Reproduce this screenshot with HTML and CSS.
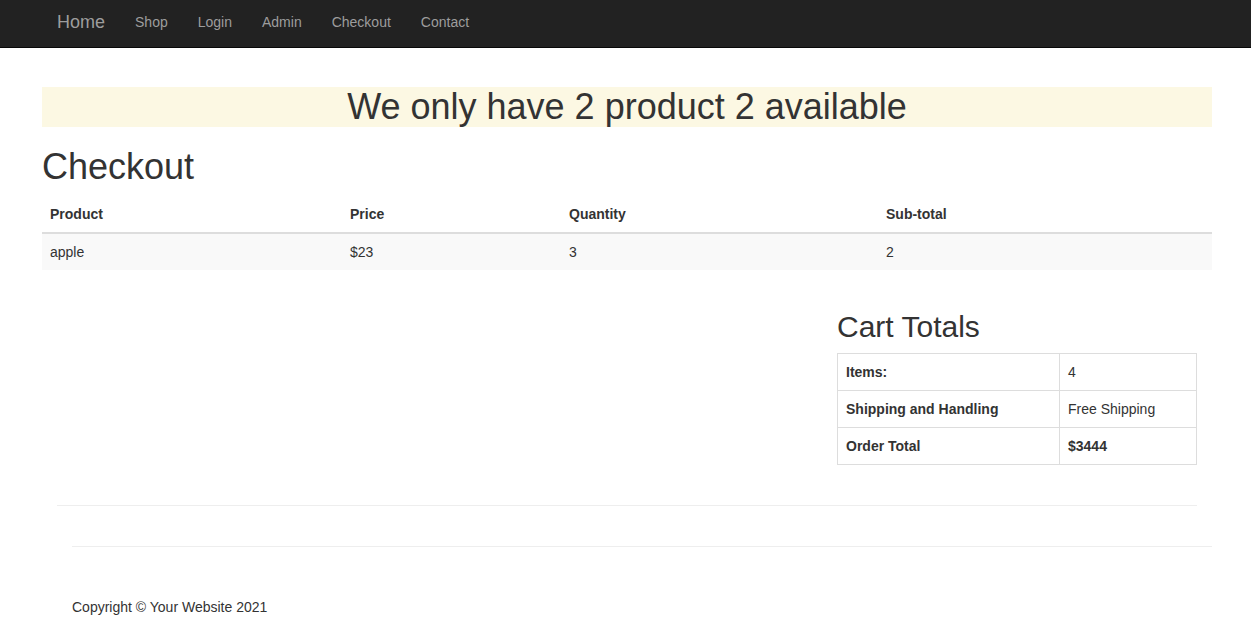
FILE: index.html
```html
<!DOCTYPE html>
<html>
<head>
<meta charset="utf-8">
<title>Checkout</title>
<link rel="stylesheet" href="styles.css">
</head>
<body>
<nav class="navbar">
  <div class="nav-container">
    <a class="brand" href="#">Home</a>
    <ul class="nav-links">
      <li><a href="#">Shop</a></li>
      <li><a href="#">Login</a></li>
      <li><a href="#">Admin</a></li>
      <li><a href="#">Checkout</a></li>
      <li><a href="#">Contact</a></li>
    </ul>
  </div>
</nav>

<main class="container">
  <section class="checkout">
    <h1 class="alert-banner">We only have 2 product 2 available</h1>
    <h1 class="page-title">Checkout</h1>
    <table class="cart-table">
      <thead>
        <tr>
          <th class="col-product">Product</th>
          <th class="col-price">Price</th>
          <th class="col-qty">Quantity</th>
          <th class="col-sub">Sub-total</th>
        </tr>
      </thead>
      <tbody>
        <tr>
          <td>apple</td>
          <td>$23</td>
          <td>3</td>
          <td>2</td>
        </tr>
      </tbody>
    </table>
  </section>

  <section class="totals-row">
    <div class="totals">
      <h2 class="totals-title">Cart Totals</h2>
      <table class="totals-table">
        <tr>
          <th class="totals-label">Items:</th>
          <td>4</td>
        </tr>
        <tr>
          <th class="totals-label">Shipping and Handling</th>
          <td>Free Shipping</td>
        </tr>
        <tr>
          <th class="totals-label">Order Total</th>
          <td><strong>$3444</strong></td>
        </tr>
      </table>
    </div>
  </section>

  <hr class="rule">
</main>

<footer class="footer">
  <hr class="rule">
  <p class="copyright">Copyright © Your Website 2021</p>
</footer>
</body>
</html>
```

FILE: styles.css
```css
* {
  box-sizing: border-box;
}

body {
  margin: 0;
  font-family: "Liberation Sans", Arial, sans-serif;
  font-size: 14px;
  line-height: 20px;
  color: #333;
  background: #fff;
}

a {
  text-decoration: none;
}

/* Navbar */
.navbar {
  height: 48px;
  background: #222;
  border-bottom: 1px solid #080808;
}

.nav-container {
  width: 1170px;
  margin-left: 42px;
  padding: 0 15px;
  display: flex;
  align-items: flex-start;
}

.brand {
  display: block;
  font-size: 18px;
  line-height: 20px;
  padding: 12px 15px 0 0;
  color: #9d9d9d;
}

.nav-links {
  list-style: none;
  margin: 0;
  padding: 0;
  display: flex;
}

.nav-links a {
  display: block;
  padding: 12px 15px 0;
  line-height: 20px;
  color: #9d9d9d;
}

/* Main */
.container {
  width: 1170px;
  margin-left: 42px;
  display: flow-root;
}

.alert-banner {
  margin: 39px 0 0;
  background: #fcf8e3;
  font-size: 36px;
  font-weight: 500;
  line-height: 40px;
  height: 40px;
  text-align: center;
  color: #333;
}

.page-title {
  margin: 20px 0 10px;
  font-size: 36px;
  font-weight: 500;
  line-height: 39px;
}

.cart-table {
  width: 100%;
  border-collapse: collapse;
  margin-bottom: 20px;
}

.cart-table th,
.cart-table td {
  padding: 8px;
  text-align: left;
  line-height: 20px;
}

.cart-table thead th {
  border-bottom: 2px solid #ddd;
  font-weight: bold;
}

.cart-table tbody tr {
  background: #f9f9f9;
}

.col-product { width: 300px; }
.col-price { width: 219px; }
.col-qty { width: 317px; }
.col-sub { width: auto; }

.totals-row {
  display: flex;
  justify-content: flex-end;
  padding: 0 15px;
}

.totals {
  width: 360px;
}

.totals-title {
  margin: 20px 0 10px;
  font-size: 30px;
  font-weight: 500;
  line-height: 33px;
}

.totals-table {
  width: 100%;
  border-collapse: collapse;
  margin-bottom: 20px;
}

.totals-table th,
.totals-table td {
  border: 1px solid #ddd;
  padding: 8px;
  text-align: left;
  line-height: 20px;
}

.totals-label {
  width: 222px;
  font-weight: bold;
}

.rule {
  margin: 20px 15px;
  border: 0;
  border-top: 1px solid #eee;
}

.footer {
  width: 1140px;
  margin-left: 72px;
  display: flow-root;
}

.footer .rule {
  margin: 20px 0;
}

.copyright {
  margin: 50px 0 10px;
}
```
